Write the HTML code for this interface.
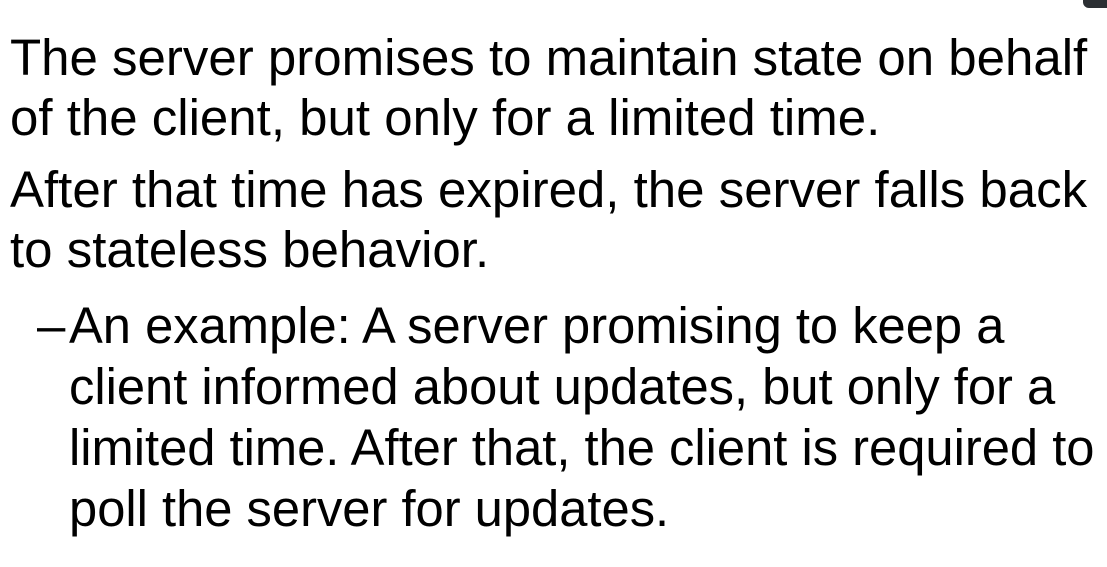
<!DOCTYPE html>
<html><head><meta charset="utf-8"><style>
html,body{margin:0;padding:0;background:#fff;width:1107px;height:567px;overflow:hidden;position:relative}
.l{position:absolute;font-family:"Liberation Sans",Arial,sans-serif;font-size:51px;line-height:60px;color:#000;white-space:nowrap}
.s{font-size:50.7px}
.c{position:absolute;right:0;top:-10px;width:24px;height:18px;background:#2b2f33;border-radius:6px 0 0 6px}
</style></head><body>
<div class="c"></div>
<div class="l" style="left:10px;top:28px">The server promises to maintain state on behalf</div>
<div class="l" style="left:10px;top:88px">of the client, but only for a limited time.</div>
<div class="l" style="left:10px;top:160px">After that time has expired, the server falls back</div>
<div class="l" style="left:10px;top:220px">to stateless behavior.</div>
<div class="l" style="left:37px;top:296px">–</div>
<div class="l s" style="left:69px;top:296px">An example: A server promising to keep a</div>
<div class="l s" style="left:69px;top:357px">client informed about updates, but only for a</div>
<div class="l s" style="left:69px;top:418px">limited time. After that, the client is required to</div>
<div class="l s" style="left:69px;top:479px">poll the server for updates.</div>
</body></html>
